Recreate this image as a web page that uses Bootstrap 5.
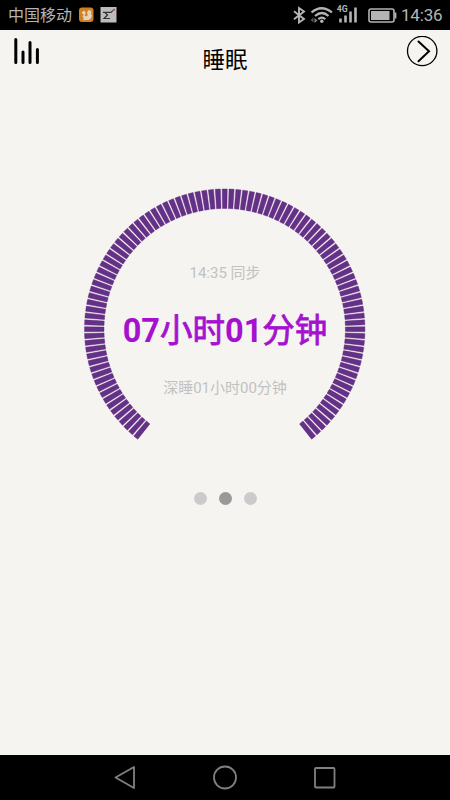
<!DOCTYPE html>
<html lang="zh-CN">
<head>
<meta charset="utf-8">
<meta name="viewport" content="width=device-width, initial-scale=1">
<title>睡眠</title>
<link rel="stylesheet" href="https://cdn.jsdelivr.net/npm/bootstrap@5.3.0/dist/css/bootstrap.min.css">
<style>
body { font-family: Roboto, "Noto Sans CJK SC", sans-serif; background: #f5f4f0; height: 800px; line-height: 1; }
svg { display: block; flex: none; }
.status-bar { height: 30px; background: #000; color: #b4b4b4; padding: 0 8px; }
.carrier { font-size: 16px; line-height: 30px; width: 71px; white-space: nowrap; padding-top: 2px; }
.clock { font-size: 17px; line-height: 32px; width: 41px; white-space: nowrap; letter-spacing: -.2px; margin-left: 2px; }
.app-head { height: 50px; padding: 6px 11px 0 13px; }
.app-title { font-size: 22.5px; line-height: 30px; margin: 9px 0 0; color: #000; font-weight: 400; }
.gauge { width: 282px; height: 282px; margin: 108px 0 0 -1px; }
.sync-text, .deep-text { font-size: 15px; line-height: 20px; color: #c2c2c2; white-space: nowrap; }
.sync-text { margin-top: 75px; margin-left: 1px; font-weight: 400; }
.total-text { font-size: 32.5px; line-height: 40px; font-weight: 700; color: #a412cf; white-space: nowrap; margin-top: 28px; margin-left: 1px; }
.total-text span { font-weight: 400; -webkit-text-stroke: .8px #a412cf; }
.deep-text { margin-top: 27px; margin-left: 1px; }
.pager { gap: 12px; margin-top: 22px; }
.pager-dot { width: 13px; height: 13px; background: #cbcbcb; }
.pager-dot.current { background: #999; }
.nav-keys { height: 45px; background: #000; padding: 0 112px; }
</style>
<script src="https://cdn.jsdelivr.net/npm/bootstrap@5.3.0/dist/js/bootstrap.bundle.min.js"></script>
</head>
<body class="d-flex flex-column overflow-hidden">
<header class="status-bar d-flex align-items-center">
  <span class="carrier">中国移动</span>
  <svg width="38" height="16" viewBox="79 7.500 38 16">
    <rect x="79" y="8" width="14.500" height="14.500" rx="3" fill="#cf8120"/>
    <path d="M81.500 13.500L83.500 11 85.500 12.500V14.500L84.500 16 86 17 88 15.500 87 13.500 88 11 90 10.500 91.500 12.500 91 14.500 92 16.500 90.500 19.500 88 20.500H83L84 18.500 82.500 17.500 83.500 15Z" fill="#e4d3be"/>
    <rect x="100.500" y="7.500" width="16" height="15.500" fill="#bcbcbc"/>
    <path d="M103 12.800H111L113 10.800M105 13L107.500 15.500 104 19H110" fill="none" stroke="#333" stroke-width="1.200"/>
    <circle cx="114" cy="10.200" r="1" fill="#d33"/>
  </svg>
  <svg class="ms-auto" width="107" height="22" viewBox="292 4 107 22" fill="none" stroke="#b4b4b4">
    <path d="M294 11.300L304 19 299 22.500V8L304 11.500 294 19.300" stroke-width="1.900"/>
    <path d="M311.500 12.500q10-8.500 20.500 0M315 16q7-6 13.500 0M318.300 19.200q3.600-3 7 0" stroke-width="2.200"/>
    <circle cx="321.800" cy="21.300" r="1.700" fill="#b4b4b4" stroke="none"/>
    <path d="M313.500 17.500v5l-3-2.500z" fill="#555" stroke="none"/><path d="M314.500 18l3 2.500-3 2.500z" fill="#888" stroke="none"/>
    <text x="336.800" y="11.500" font-family="Roboto, sans-serif" font-size="8.700" font-weight="700" fill="#b4b4b4" stroke="none">4G</text>
    <path d="M340.500 18.500v4M345.500 15.500v7M350.500 11.500v11M355.500 7.500v15" stroke-width="2.600"/>
    <rect x="369" y="9" width="25" height="13" rx="2" stroke-width="1.600"/>
    <rect x="371" y="11" width="18.500" height="9" fill="#b4b4b4" stroke="none"/>
    <path d="M395.500 12.500v6" stroke-width="1.800"/>
  </svg>
  <span class="clock">14:36</span>
</header>

<main class="flex-grow-1 d-flex flex-column align-items-center">
  <div class="app-head w-100 d-flex justify-content-between align-items-start">
    <svg width="31" height="32" viewBox="13 36 31 32" fill="none" stroke="#000" stroke-width="3" stroke-linecap="round">
      <path d="M15.800 39.500v23M23 52v10.500M30 42.500v20M37.400 49.500v13"/>
    </svg>
    <h1 class="app-title">睡眠</h1>
    <svg width="33" height="32" viewBox="406 36 33 32" fill="none" stroke="#000">
      <circle cx="422.200" cy="51" r="14.700" stroke-width="1.300"/>
      <path d="M418.500 41.500l10.500 9.700-10.500 10" stroke-width="2" stroke-linecap="round"/>
    </svg>
  </div>

  <section class="gauge position-relative d-flex flex-column align-items-center">
    <svg id="ring" class="position-absolute top-0 start-0" width="282" height="282" viewBox="-140.700 -141.200 282 282" fill="#653087" stroke="#542078" stroke-width=".4"></svg>
    <div class="sync-text">14:35 同步</div>
    <div class="total-text">07<span>小时</span>01<span>分钟</span></div>
    <div class="deep-text">深睡01小时00分钟</div>
  </section>

  <div class="pager d-flex">
    <span class="pager-dot rounded-circle"></span>
    <span class="pager-dot rounded-circle current"></span>
    <span class="pager-dot rounded-circle"></span>
  </div>
</main>

<footer class="nav-keys d-flex justify-content-between align-items-center">
  <svg width="26" height="26" viewBox="0 0 26 26" fill="none" stroke="#808080" stroke-width="1.800" stroke-linejoin="round"><path d="M22 2v21L3.500 12.500z"/></svg>
  <svg width="26" height="26" viewBox="0 0 26 26" fill="none" stroke="#808080" stroke-width="1.800"><circle cx="13" cy="12.500" r="11"/></svg>
  <svg width="26" height="26" viewBox="0 0 26 26" fill="none" stroke="#808080" stroke-width="1.800"><rect x="3" y="3" width="19.500" height="19.500" rx="1"/></svg>
</footer>
<script>
// 101 ticks, 128 to a full turn, with the opening at the bottom
const ring = document.getElementById('ring');
for (let i = -50; i <= 50; i++) {
  const tick = document.createElementNS('http://www.w3.org/2000/svg', 'path');
  tick.setAttribute('d', 'M-2.550-140.200H2.550L2.200-120.700H-2.200Z');
  tick.setAttribute('transform', `rotate(${i * 2.8125})`);
  ring.appendChild(tick);
}
</script>
</body>
</html>
